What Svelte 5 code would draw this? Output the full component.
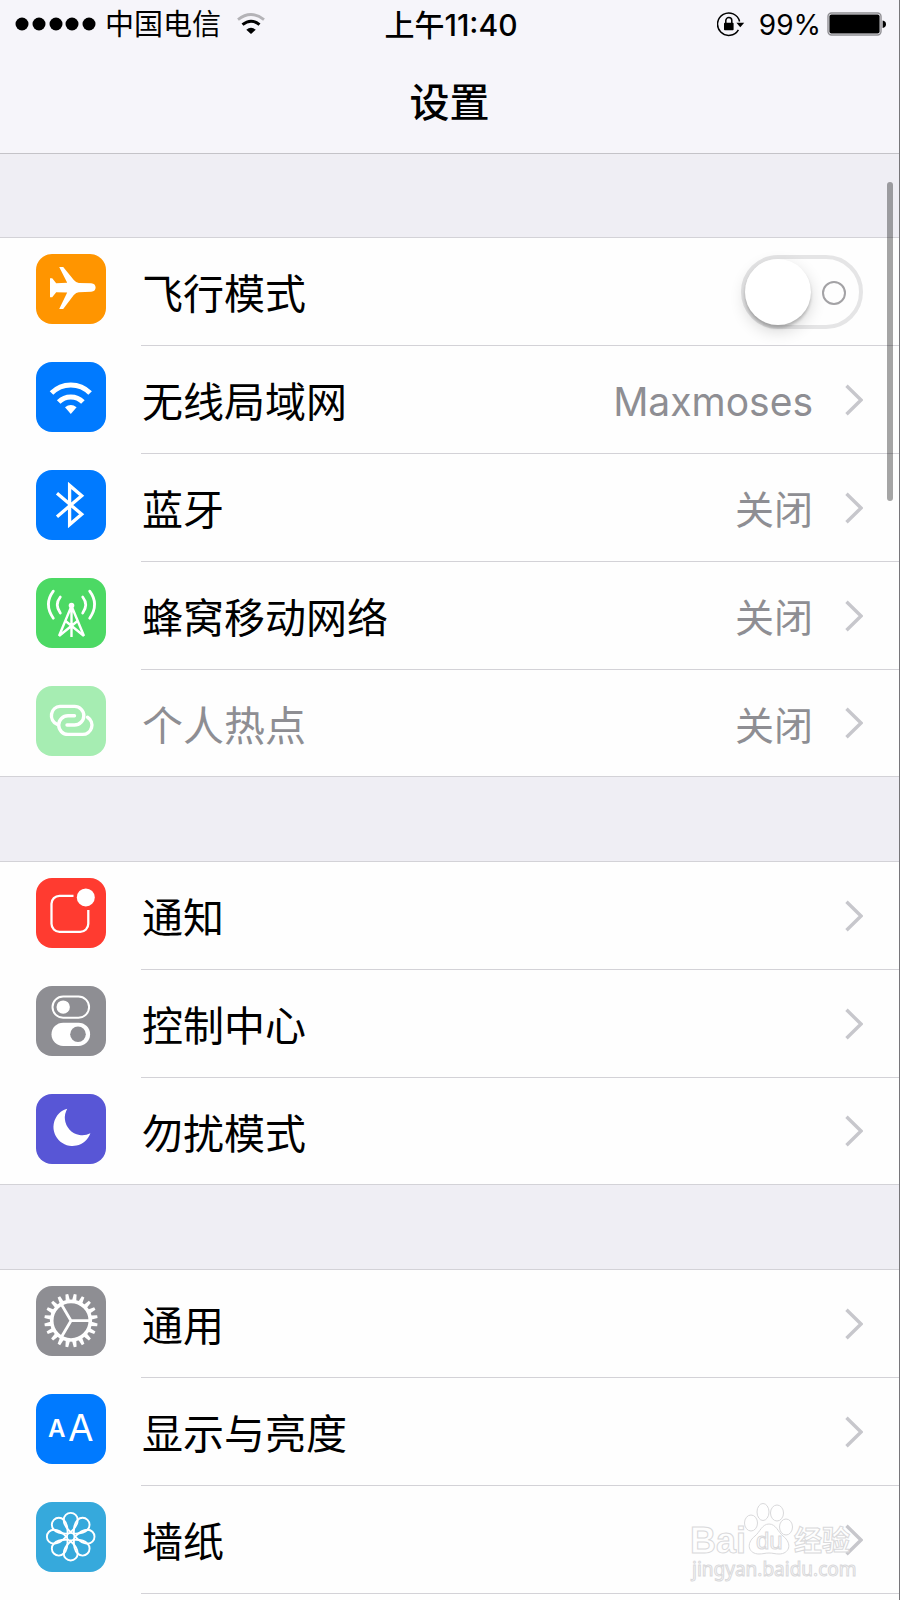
<script lang="ts">
  type Item = {
    id: string;
    label: string;
    color: string;
    value?: string;
    toggle?: boolean;
    disabled?: boolean;
  };

  const groups: Item[][] = [
    [
      { id: 'airplane', label: '飞行模式', color: '#ff9500', toggle: true },
      { id: 'wifi', label: '无线局域网', color: '#007aff', value: 'Maxmoses' },
      { id: 'bluetooth', label: '蓝牙', color: '#007aff', value: '关闭' },
      { id: 'cellular', label: '蜂窝移动网络', color: '#4cd964', value: '关闭' },
      { id: 'hotspot', label: '个人热点', color: '#a6edb2', value: '关闭', disabled: true }
    ],
    [
      { id: 'notifications', label: '通知', color: '#ff3b30' },
      { id: 'control', label: '控制中心', color: '#8e8e93' },
      { id: 'dnd', label: '勿扰模式', color: '#5856d6' }
    ],
    [
      { id: 'general', label: '通用', color: '#8e8e93' },
      { id: 'display', label: '显示与亮度', color: '#007aff' },
      { id: 'wallpaper', label: '墙纸', color: '#36a9dc' }
    ]
  ];

  const teeth = Array.from({ length: 20 }, (_, i) => i * 18 + 9);
  const petals = Array.from({ length: 8 }, (_, i) => i * 45);

  let airplaneMode = $state(false);
</script>

{#snippet icon(id: string)}
  <svg viewBox="0 0 70 70" width="70" height="70" fill="none" stroke="#fff" aria-hidden="true">
    {#if id === 'airplane'}
      <path
        d="M14 24.3h2.2l4 5 11-.6-8-15.7h4l10.6 13q2.4 2.8 5 2.9l12.4.4c3 .2 4.4 2 4.4 4.3s-1.4 4-4.4 4.2l-12.4.4q-2.6.1-5 2.9l-10.6 13.9h-4l8-16.4-11-.4-4 5H14z"
        fill="#fff"
        stroke="none"
      />
    {:else if id === 'wifi'}
      <path d="M15.5 31a27 27 0 0 1 38.6 0" stroke-width="5" />
      <path d="M22.7 40a17 17 0 0 1 24.2 0" stroke-width="5" />
      <path d="M29 45.2q5.8-4.6 11.6 0L34.8 52z" fill="#fff" stroke="none" />
    {:else if id === 'bluetooth'}
      <path d="M21 23.3l24.7 21L33.6 54.6V15.4l12.1 10.3-24.7 21" stroke-width="3.3" />
    {:else if id === 'cellular'}
      <g stroke-width="2.8" stroke-linecap="round">
        <path d="M17.3 13.2q-9.8 13 0 27M24.3 19q-6 7.6 0 16M53.7 13.2q9.8 13 0 27M46.7 19q6 7.6 0 16" />
      </g>
      <path d="M35.5 28v31M35.5 28L23 58M35.5 28L48 58M23 58l18.5-15M48 58L29.5 43" stroke-width="2.4" />
      <circle cx="35.5" cy="27.5" r="2.8" fill="#fff" stroke="none" />
    {:else if id === 'hotspot'}
      <g stroke-width="3.4" stroke-linecap="round">
        <path d="M21 38.2a9.3 9.3 0 0 1 3-17.8h14.5a9.3 9.3 0 0 1 0 18.6h-7.5" />
        <path d="M38.5 29.8H32a9.3 9.3 0 0 0 0 18.6h14.5a9.3 9.3 0 0 0 5-17.2" />
      </g>
    {:else if id === 'notifications'}
      <path d="M37.5 17.8H23.5a8 8 0 0 0-8 8v20a8 8 0 0 0 8 8h20.8a8 8 0 0 0 8-8V32" stroke-width="2.3" />
      <circle cx="49.8" cy="19.4" r="9" fill="#fff" stroke="none" />
    {:else if id === 'control'}
      <rect x="16.5" y="10.5" width="36.6" height="21.2" rx="10.6" stroke-width="2" />
      <circle cx="27.2" cy="21.1" r="6.7" fill="#fff" stroke="none" />
      <rect x="15.5" y="36.7" width="38.6" height="23.2" rx="11.6" fill="#fff" stroke="none" />
      <circle cx="42" cy="48.3" r="7.8" fill="#8e8e93" stroke="none" />
    {:else if id === 'dnd'}
      <path d="M31.3 14.7A19 19 0 1 0 54.4 39.2 17.5 17.5 0 0 1 31.3 14.7z" fill="#fff" stroke="none" />
    {:else if id === 'general'}
      <circle cx="35" cy="34.7" r="19.3" stroke-width="3.6" />
      {#each teeth as angle}
        <path d="M32.8 15l.8-7h2.8l.8 7z" fill="#fff" stroke="none" transform="rotate({angle} 35 34.7)" />
      {/each}
      <path d="M35 34.7h18M35 34.7l-9.4-16M35 34.7l-9.4 16" stroke-width="2.8" />
    {:else if id === 'display'}
      <text class="glyph small" x="12" y="43">A</text>
      <text class="glyph" x="32" y="47">A</text>
    {:else if id === 'wallpaper'}
      <g stroke-width="1.9">
        {#each petals as angle}
          <path
            d="M34.7 30.2c-3.6-3.2-7-7.2-7-12.3a7 7 0 0 1 14 0c0 5.1-3.4 9.1-7 12.3z"
            stroke-linejoin="round"
            transform="rotate({angle} 34.7 34.7)"
          />
        {/each}
        <circle cx="34.7" cy="34.7" r="3.8" />
      </g>
    {/if}
  </svg>
{/snippet}

<div class="page">
  <header>
    <div class="status">
      <div class="carrier">
        <svg viewBox="0 0 82 14" width="82" height="14" aria-hidden="true">
          {#each [7, 24, 41, 57, 74] as cx}
            <circle {cx} cy="7" r="6.5" />
          {/each}
        </svg>
        <span>中国电信</span>
        <svg class="signal" viewBox="0 0 28 22" width="28" height="22" fill="none" aria-hidden="true">
          <path d="M1 6.6q13-10.2 26 0" stroke="#b4b3b7" stroke-width="2.8" />
          <path d="M5.5 11.7q8.5-7 17 0" stroke="#000" stroke-width="3" />
          <path d="M9.3 16.8q4.7-4 9.4 0L14 21z" fill="#000" />
        </svg>
      </div>
      <time>上午11:40</time>
      <div class="power">
        <svg viewBox="0 0 28 25" width="28" height="25" fill="none" aria-hidden="true">
          <path d="M22.6 9.5a11.2 11.2 0 1 0-1.2 8.3" stroke="#000" stroke-width="1.5" />
          <path d="M19.4 10.7h7.8l-3.9 4.6z" fill="#000" />
          <rect x="7" y="10.7" width="9.6" height="7.6" rx=".8" fill="#000" />
          <path d="M8.8 11V8.6a3 3 0 0 1 6 0V11" stroke="#000" stroke-width="1.5" />
        </svg>
        <span>99%</span>
        <svg viewBox="0 0 60 24" width="60" height="24" aria-hidden="true">
          <rect x="1" y="1" width="53" height="22" rx="3.5" fill="none" stroke="#8f8e92" stroke-width="1.4" />
          <rect x="2.4" y="2.4" width="50.2" height="19.2" rx="2" />
          <path d="M55.6 8.4q3.4.6 3.4 3.8t-3.4 3.8z" />
        </svg>
      </div>
    </div>
    <h1>设置</h1>
  </header>

  <main>
    {#each groups as group}
      <ul class="group">
        {#each group as item}
          <li>
            {#if item.toggle}
              <label class="row" for={item.id}>
                <span class="icon" style="background: {item.color};">{@render icon(item.id)}</span>
                <span class="body">
                  <span class="label">{item.label}</span>
                  <input id={item.id} type="checkbox" role="switch" bind:checked={airplaneMode} />
                </span>
              </label>
            {:else}
              <a class="row" class:disabled={item.disabled} href="#{item.id}">
                <span class="icon" style="background: {item.color};">{@render icon(item.id)}</span>
                <span class="body">
                  <span class="label">{item.label}</span>
                  {#if item.value}
                    <span class="value">{item.value}</span>
                  {/if}
                  <svg viewBox="0 0 18 32" width="18" height="32" fill="none" aria-hidden="true">
                    <path d="M1.5 1.8L16 16 1.5 30.2" stroke="#c7c7cc" stroke-width="3.4" />
                  </svg>
                </span>
              </a>
            {/if}
          </li>
        {/each}
      </ul>
    {/each}
  </main>

  <div class="scrollbar"></div>

  <svg class="watermark" viewBox="0 0 170 84" width="170" height="84">
    <g fill="#fff" fill-opacity=".6" stroke="#d9d9db" stroke-width="1">
      <ellipse cx="62" cy="23" rx="6.5" ry="8" />
      <ellipse cx="74" cy="12" rx="6" ry="8.5" />
      <ellipse cx="88" cy="13" rx="6.5" ry="8" />
      <ellipse cx="97" cy="27" rx="6.5" ry="8" />
      <path d="M80 24c7 0 9 8 14 12 10 8 6 18-4 18-4 0-6-1-10-1s-6 1-10 1c-10 0-14-10-4-18 5-4 7-12 14-12z" />
      <text class="brand" x="1" y="53">Bai</text>
      <text class="brand du" x="67" y="49">du</text>
      <text class="brand zh" x="105" y="51">经验</text>
      <text class="site" x="3" y="76">jingyan.baidu.com</text>
    </g>
  </svg>
</div>

<style>
  :global(body) {
    margin: 0;
    background: #fefefe;
  }

  .page {
    position: relative;
    box-sizing: border-box;
    min-height: 100vh;
    display: flex;
    flex-direction: column;
    border-right: 1px solid #77767a;
    background: #efeef4;
    color: #000;
    font-family: Inter, 'Noto Sans CJK SC', sans-serif;
  }

  header {
    background: #f6f5fa;
    border-bottom: 1px solid #c4c3c8;
  }

  .status {
    display: grid;
    grid-template-columns: 1fr auto 1fr;
    align-items: center;
    height: 48px;
    padding: 0 12px 0 15px;
    font-size: 29px;
    line-height: 40px;
  }

  .carrier,
  .power {
    display: flex;
    align-items: center;
    gap: 8px;
  }

  .status span,
  time {
    padding-top: 2px;
  }

  .signal {
    margin-left: 8px;
  }

  .power {
    justify-content: flex-end;
    gap: 6px;
    font-size: 28px;
  }

  .power span {
    margin-left: 8px;
  }

  time {
    font-size: 30px;
    font-weight: 500;
  }

  h1 {
    margin: 0;
    padding-top: 4px;
    font-size: 40px;
    font-weight: 500;
    line-height: 101px;
    text-align: center;
  }

  main {
    flex: 1;
    display: flex;
    flex-direction: column;
    gap: 84px;
    padding-top: 83px;
  }

  .group {
    margin: 0;
    padding: 0;
    list-style: none;
    background: #fefefe;
    border-top: 1px solid #d3d2d7;
    border-bottom: 1px solid #d3d2d7;
  }

  .group:last-child {
    flex: 1;
    border-bottom: 0;
  }

  .row {
    display: flex;
    gap: 35px;
    height: 108px;
    padding-left: 36px;
    color: inherit;
    text-decoration: none;
  }

  .group:not(:last-child) li:last-child .row {
    height: 106px;
  }

  .group:not(:last-child) li:last-child .body {
    border-bottom: 0;
  }

  .icon {
    width: 70px;
    height: 70px;
    margin-top: 16px;
    border-radius: 16px;
    overflow: hidden;
  }

  .icon svg {
    display: block;
  }

  .glyph {
    font-size: 37px;
    fill: #fff;
    stroke: none;
  }

  .glyph.small {
    font-size: 24px;
    font-weight: 600;
  }

  .body {
    flex: 1;
    display: flex;
    align-items: center;
    gap: 32px;
    padding-right: 36px;
    border-bottom: 1px solid #d3d2d7;
  }

  .label,
  .value {
    padding-top: 5px;
    line-height: 60px;
  }

  .label {
    flex: 1;
    padding-left: 1px;
    font-size: 41px;
  }

  .value {
    color: #8e8e93;
    font-size: 39px;
  }

  .disabled .label {
    color: #8e8e93;
  }

  input {
    appearance: none;
    position: relative;
    box-sizing: border-box;
    width: 122px;
    height: 74px;
    margin: 0;
    border: 4px solid #e5e5e6;
    border-radius: 37px;
    background: #fefefe;
  }

  /* knob */
  input::before {
    content: '';
    position: absolute;
    top: 0;
    left: 0;
    width: 66px;
    height: 66px;
    border-radius: 50%;
    background: #fff;
    box-shadow: 0 6px 16px rgba(0, 0, 0, 0.16), 0 3px 3px rgba(0, 0, 0, 0.2);
  }

  /* "off" mark */
  input::after {
    content: '';
    position: absolute;
    top: 22px;
    right: 13px;
    box-sizing: border-box;
    width: 24px;
    height: 24px;
    border: 2px solid #a3a2a5;
    border-radius: 50%;
  }

  input:checked {
    border-color: #4cd964;
    background: #4cd964;
  }

  input:checked::before {
    left: 48px;
  }

  input:checked::after {
    display: none;
  }

  .scrollbar {
    position: absolute;
    top: 182px;
    right: 6px;
    width: 6px;
    height: 319px;
    border-radius: 3px;
    background: rgba(0, 0, 0, 0.35);
  }

  .watermark {
    position: absolute;
    right: 40px;
    bottom: 16px;
    pointer-events: none;
  }

  .brand {
    font-family: 'Liberation Sans', sans-serif;
    font-size: 36px;
    font-weight: 700;
  }

  .du {
    font-size: 24px;
    font-weight: 400;
  }

  .zh {
    font-family: 'Noto Sans CJK SC', sans-serif;
    font-size: 28px;
  }

  .site {
    font-family: 'Noto Sans', sans-serif;
    font-size: 19px;
  }
</style>
